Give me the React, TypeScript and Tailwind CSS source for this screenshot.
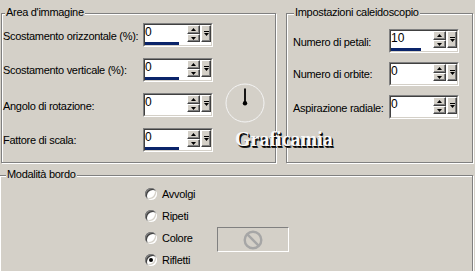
import React from "react";

function Btn({ className, children }: { className: string; children?: React.ReactNode }) {
  return (
    <div
      className={
        "border border-t-white border-l-white border-b-[#404040] border-r-[#404040] bg-[#d4d0c8] flex items-center justify-center shadow-[inset_-1px_-1px_0_#808080] " +
        className
      }
    >
      {children}
    </div>
  );
}

function Up() {
  return (
    <svg width="5" height="3" viewBox="0 0 5 3">
      <path d="M2.5 0 L5 3 L0 3 Z" fill="#000" />
    </svg>
  );
}
function Down() {
  return (
    <svg width="5" height="3" viewBox="0 0 5 3">
      <path d="M0 0 L5 0 L2.5 3 Z" fill="#000" />
    </svg>
  );
}
function End() {
  return (
    <svg width="5" height="6" viewBox="0 0 5 6">
      <rect x="0" y="0" width="5" height="1" fill="#000" />
      <path d="M0 2 L5 2 L2.5 5 Z" fill="#000" />
    </svg>
  );
}

function Spin({ value, bar }: { value: string; bar?: string }) {
  return (
    <div className="w-[70px] h-[24px] border border-t-[#808080] border-l-[#808080] border-b-white border-r-white shrink-0">
      <div className="w-full h-full border border-t-[#404040] border-l-[#404040] border-b-[#d4d0c8] border-r-[#d4d0c8] bg-white flex flex-col">
        <div className="flex h-[17px]">
          <div className="flex-1 text-[12px] leading-[12px] pt-[1px] tracking-normal">{value}</div>
          <div className="w-[13px] flex flex-col">
            <Btn className="h-[9px]">
              <Up />
            </Btn>
            <Btn className="h-[8px]">
              <Down />
            </Btn>
          </div>
          <Btn className="w-[10px] ml-[1px] h-[17px]">
            <End />
          </Btn>
        </div>
        <div className="flex-1 flex items-end">
          {bar ? <div className={"h-[3px] bg-[#0a246a] " + bar} /> : null}
        </div>
      </div>
    </div>
  );
}

function Group({
  className,
  label,
  labelPos,
  children,
}: {
  className: string;
  label: string;
  labelPos: string;
  children?: React.ReactNode;
}) {
  return (
    <div
      className={
        "relative border border-[#808080] shadow-[inset_1px_1px_0_#fff,1px_1px_0_#fff] shrink-0 " + className
      }
    >
      <div className={"absolute top-[-8px] bg-[#d4d0c8] px-[1px] leading-[12px] whitespace-nowrap " + labelPos}>
        {label}
      </div>
      {children}
    </div>
  );
}

function Radio({ checked, label }: { checked?: boolean; label: string }) {
  return (
    <div className="flex items-center h-[22px]">
      <div className="w-[12px] h-[12px] rounded-full bg-white flex items-center justify-center shadow-[inset_1px_1px_0_#808080,inset_-1px_-1px_0_#fff,inset_2px_2px_0_#404040,inset_-2px_-2px_0_#d4d0c8]">
        {checked ? <div className="w-[4px] h-[4px] rounded-full bg-black" /> : null}
      </div>
      <span className="ml-[5px] w-[55px] leading-[12px]">{label}</span>
    </div>
  );
}

export default function App() {
  return (
    <div className="relative w-[475px] h-[271px] overflow-hidden bg-[#d4d0c8] text-black text-[11px] tracking-[-0.3px] [font-family:'Liberation_Sans',Arial,sans-serif]">
      <div className="flex pt-[13px]">
        <Group className="ml-[1px] w-[275px] h-[150px]" label="Area d'immagine" labelPos="left-[3px]">
          <div className="flex">
            <div className="flex flex-col pl-[1px] pt-[9px] gap-[11px]">
              <div className="flex items-center">
                <span className="w-[140px] pt-[3px]">Scostamento orizzontale (%):</span>
                <Spin value="0" bar="w-[34px]" />
              </div>
              <div className="flex items-center">
                <span className="w-[140px] pt-[1px]">Scostamento verticale (%):</span>
                <Spin value="0" bar="w-[34px]" />
              </div>
              <div className="flex items-center">
                <span className="w-[140px] pt-[2px]">Angolo di rotazione:</span>
                <Spin value="0" />
              </div>
              <div className="flex items-center">
                <span className="w-[140px] pt-[1px]">Fattore di scala:</span>
                <Spin value="0" bar="w-[34px]" />
              </div>
            </div>
            <div className="ml-[12px] mt-[69px]">
              <svg width="40" height="40" viewBox="0 0 40 40">
                <circle cx="20" cy="20" r="19" fill="none" stroke="#f4f4f4" strokeWidth="1" />
                <path d="M20 5.5 L20 20" stroke="#000" strokeWidth="1.8" />
                <circle cx="20" cy="20.3" r="2.2" fill="#000" />
              </svg>
            </div>
          </div>
        </Group>
        <Group className="ml-[10px] w-[187px] h-[150px]" label="Impostazioni caleidoscopio" labelPos="left-[7px]">
          <div className="flex flex-col pl-[6px] pt-[15px] gap-[9px]">
            <div className="flex items-center">
              <span className="w-[96px] pt-[2px]">Numero di petali:</span>
              <Spin value="10" bar="w-[30px]" />
            </div>
            <div className="flex items-center">
              <span className="w-[96px] pt-[1px]">Numero di orbite:</span>
              <Spin value="0" />
            </div>
            <div className="flex items-center">
              <span className="w-[96px] pt-[2px]">Aspirazione radiale:</span>
              <Spin value="0" />
            </div>
          </div>
        </Group>
      </div>
      <div className="flex mt-[12px]">
        <Group className="ml-[-1px] w-[474px] h-[120px]" label="Modalità bordo" labelPos="left-[6px]">
          <div className="flex flex-col pl-[145px] pt-[7px]">
            <Radio label="Avvolgi" />
            <Radio label="Ripeti" />
            <div className="flex items-center h-[22px]">
              <Radio label="Colore" />
              <div className="mt-[3px] shrink-0 w-[72px] h-[25px] border border-t-[#808080] border-l-[#808080] border-b-white border-r-white flex items-center justify-center">
                <svg width="22" height="22" viewBox="0 0 22 22">
                  <circle cx="11" cy="11" r="8.3" fill="none" stroke="#a6a6a6" strokeWidth="2.4" />
                  <path d="M5.2 5.2 L16.8 16.8" stroke="#a6a6a6" strokeWidth="2.4" />
                </svg>
              </div>
            </div>
            <Radio label="Rifletti" checked />
          </div>
        </Group>
      </div>
      <div className="absolute left-[235px] top-[129px] text-[20px] leading-[20px] font-bold tracking-normal text-[#f8f8f8] [font-family:'Liberation_Serif','Times_New_Roman',serif] [text-shadow:1px_1px_0_#000,1.5px_1.5px_0_#222]">
        Graficamia
      </div>
    </div>
  );
}
